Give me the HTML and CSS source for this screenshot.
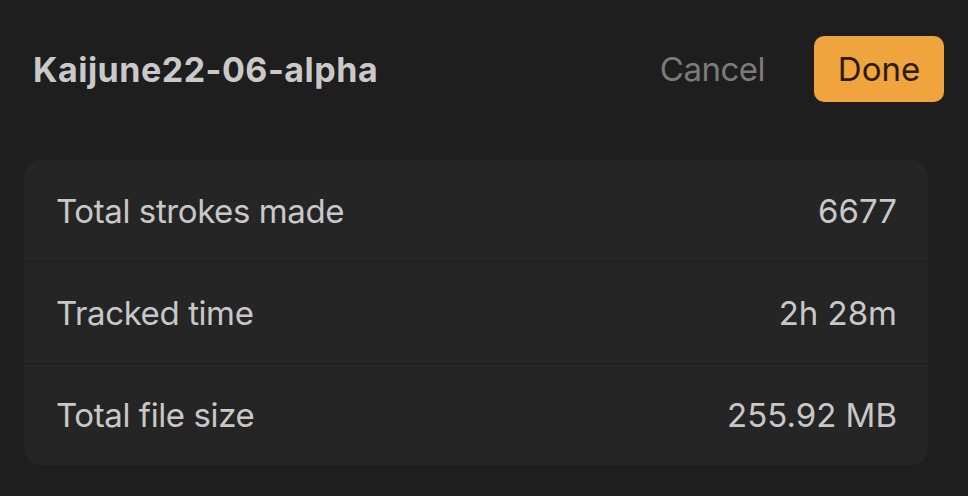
FILE: index.html
```html
<!DOCTYPE html>
<html>
<head>
<meta charset="utf-8">
<link rel="stylesheet" href="styles.css">
</head>
<body>
<div class="sheet">
  <header class="header">
    <h1 class="title">Kaijune22-06-alpha</h1>
    <div class="actions">
      <button class="btn-cancel">Cancel</button>
      <button class="btn-done">Done</button>
    </div>
  </header>
  <section class="card">
    <div class="row"><span class="label">Total strokes made</span><span class="value">6677</span></div>
    <div class="row"><span class="label">Tracked time</span><span class="value">2h 28m</span></div>
    <div class="row"><span class="label">Total file size</span><span class="value">255.92 MB</span></div>
  </section>
</div>
</body>
</html>
```

FILE: styles.css
```css
html, body {
  margin: 0;
  padding: 0;
  background: #1e1e1e;
  width: 968px;
  height: 496px;
  overflow: hidden;
}
.sheet {
  font-family: Inter, "Noto Sans", sans-serif;
  -webkit-font-smoothing: antialiased;
}
.header {
  display: flex;
  align-items: center;
  justify-content: space-between;
  padding: 36px 24px 0 33px;
  height: 66px;
}
.title {
  margin: 0;
  font-size: 34px;
  font-weight: 700;
  color: #c9c9c9;
  letter-spacing: 0.5px;
}
.actions {
  display: flex;
  align-items: center;
  gap: 49px;
}
.btn-cancel {
  background: none;
  border: none;
  padding: 0;
  font-family: inherit;
  font-size: 33px;
  letter-spacing: -0.5px;
  color: #7b7b7b;
}
.btn-done {
  background: #f0a43e;
  border: none;
  border-radius: 10px;
  width: 130px;
  height: 66px;
  padding: 0;
  font-family: inherit;
  font-size: 33px;
  color: #2a1c08;
}
.card {
  margin: 58px 40px 0 24px;
  background: #252525;
  border-radius: 16px;
  overflow: hidden;
}
.row {
  display: flex;
  justify-content: space-between;
  align-items: center;
  height: 101px;
  padding: 0 31px 0 32px;
  border-top: 1px solid #1d1d1d;
  font-size: 33px;
  color: #c8c8c8;
}
.row:first-child {
  border-top: none;
}
.label {
  letter-spacing: -0.4px;
}
```
